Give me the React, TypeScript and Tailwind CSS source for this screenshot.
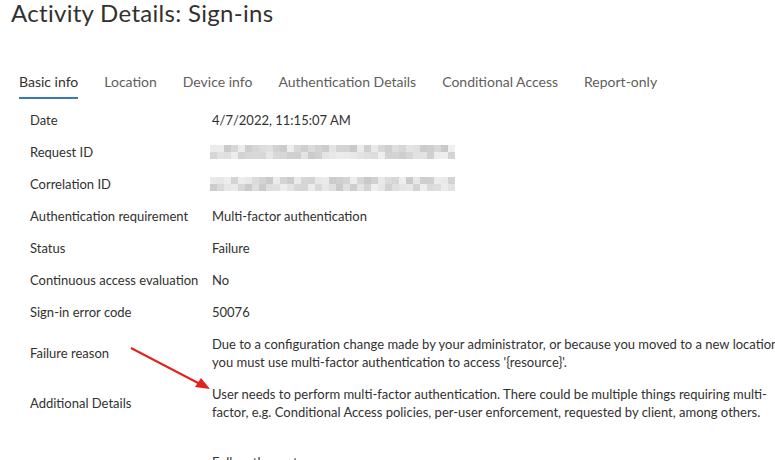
import React from 'react';

const tabs = ['Basic info', 'Location', 'Device info', 'Authentication Details', 'Conditional Access', 'Report-only'];

// pseudo-random gray blocks standing in for the redacted ids
const blurCells = (seed: number) => {
  const cells: string[][] = [[], []];
  let s = seed;
  for (let r = 0; r < 2; r++) {
    for (let c = 0; c < 35; c++) {
      s = (s * 9301 + 49297) % 233280;
      const v = 200 + Math.floor((s / 233280) * 40);
      cells[r].push(`rgb(${v},${v},${v})`);
    }
  }
  return cells;
};

const Redacted = ({ seed }: { seed: number }) => {
  const cells = blurCells(seed);
  return (
    <div className="flex flex-col blur-[0.6px] -ml-[2px]">
      {cells.map((row, i) => (
        <div key={i} className="flex">
          {row.map((c, j) => (
            <div key={j} className="w-[7px] h-[7px]" style={{ background: c }} />
          ))}
        </div>
      ))}
    </div>
  );
};

const Row = ({ label, children, multi }: { label: string; children: React.ReactNode; multi?: boolean }) => (
  <div className={`flex items-center ${multi ? 'py-[7px]' : 'py-[6px] min-h-[32px]'}`}>
    <div className="w-[212px] shrink-0 pl-[30px] leading-[20px] whitespace-nowrap">{label}</div>
    <div className={`w-[580px] shrink-0 ${multi ? 'leading-[18px]' : 'leading-[20px]'}`}>{children}</div>
  </div>
);

export default function App() {
  return (
    <div
      className="relative w-[775px] h-[460px] overflow-hidden bg-white text-[#323130]"
      style={{ fontFamily: '"Segoe UI", Lato, sans-serif' }}
    >
      <h1 className="pl-[11px] text-[24px] leading-[26px] tracking-[0.3px] text-[#323130]">Activity Details: Sign-ins</h1>

      <div className="flex gap-[26px] pl-[19px] mt-[46px] text-[14px]">
        {tabs.map((t, i) => (
          <div key={t} className="flex flex-col">
            <span className={`leading-[20px] ${i === 0 ? 'text-[#323130]' : 'text-[#605e5c]'}`}>{t}</span>
            <span className={`mt-[5px] h-[2px] ${i === 0 ? 'bg-[#3b78b5]' : 'bg-transparent'}`} />
          </div>
        ))}
      </div>

      <div className="mt-[5px] text-[13px]">
        <Row label="Date">4/7/2022, 11:15:07 AM</Row>
        <Row label="Request ID">
          <Redacted seed={17} />
        </Row>
        <Row label="Correlation ID">
          <Redacted seed={91} />
        </Row>
        <Row label="Authentication requirement">Multi-factor authentication</Row>
        <Row label="Status">Failure</Row>
        <Row label="Continuous access evaluation">No</Row>
        <Row label="Sign-in error code">50076</Row>
        <Row label="Failure reason" multi>
          Due to a configuration change made by your administrator, or because you moved to a new location, you must use
          multi-factor authentication to access '{'{resource}'}'.
        </Row>
        <Row label="Additional Details" multi>
          User needs to perform multi-factor authentication. There could be multiple things requiring multi-factor, e.g.
          Conditional Access policies, per-user enforcement, requested by client, among others.
        </Row>
        <Row label="" multi>
          <br />
          Follow these steps:
        </Row>
      </div>

      <svg className="absolute left-0 top-0 pointer-events-none" width="775" height="460">
        <line x1="131" y1="348" x2="200" y2="384" stroke="#e3211f" strokeWidth="2" />
        <polygon points="210,389 195,387 201,378" fill="#e3211f" />
      </svg>
    </div>
  );
}
